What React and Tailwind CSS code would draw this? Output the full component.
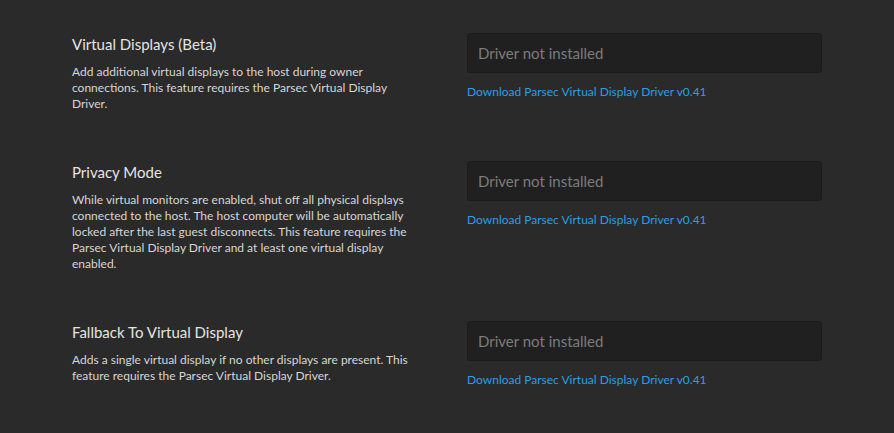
import React from 'react';

const sections = [
    {
        title: 'Virtual Displays (Beta)',
        text: 'Add additional virtual displays to the host during owner connections. This feature requires the Parsec Virtual Display Driver.',
    },
    {
        title: 'Privacy Mode',
        text: 'While virtual monitors are enabled, shut off all physical displays connected to the host. The host computer will be automatically locked after the last guest disconnects. This feature requires the Parsec Virtual Display Driver and at least one virtual display enabled.',
    },
    {
        title: 'Fallback To Virtual Display',
        text: 'Adds a single virtual display if no other displays are present. This feature requires the Parsec Virtual Display Driver.',
    },
];

const SettingRow = ({ title, text }) => {
    return (
        <div className="grid grid-cols-2 gap-10 items-start">
            <div>
                <h3 className="text-[15px] leading-[22px] text-[#e4e4e4]">{title}</h3>
                <p className="mt-[9px] max-w-[342px] text-[12px] leading-[16px] text-[#d6d6d6]">{text}</p>
            </div>
            <div>
                <div className="h-10 rounded-[3px] bg-[#202020] border border-[#1b1b1b] flex items-center px-[10px]">
                    <span className="text-[15px] text-[#7c7c7c]">Driver not installed</span>
                </div>
                <a href="#" className="block mt-[11px] text-[12px] leading-[16px] text-[#2a9fe3]">
                    Download Parsec Virtual Display Driver v0.41
                </a>
            </div>
        </div>
    );
};

export default function App() {
    return (
        <div
            className="w-[894px] h-[433px] bg-[#2a2a2a] overflow-hidden px-[72px] pt-[33px] flex flex-col gap-[49px]"
            style={{ fontFamily: 'Lato, "Noto Sans", sans-serif' }}
        >
            {sections.map((s) => (
                <SettingRow key={s.title} title={s.title} text={s.text} />
            ))}
        </div>
    );
}
